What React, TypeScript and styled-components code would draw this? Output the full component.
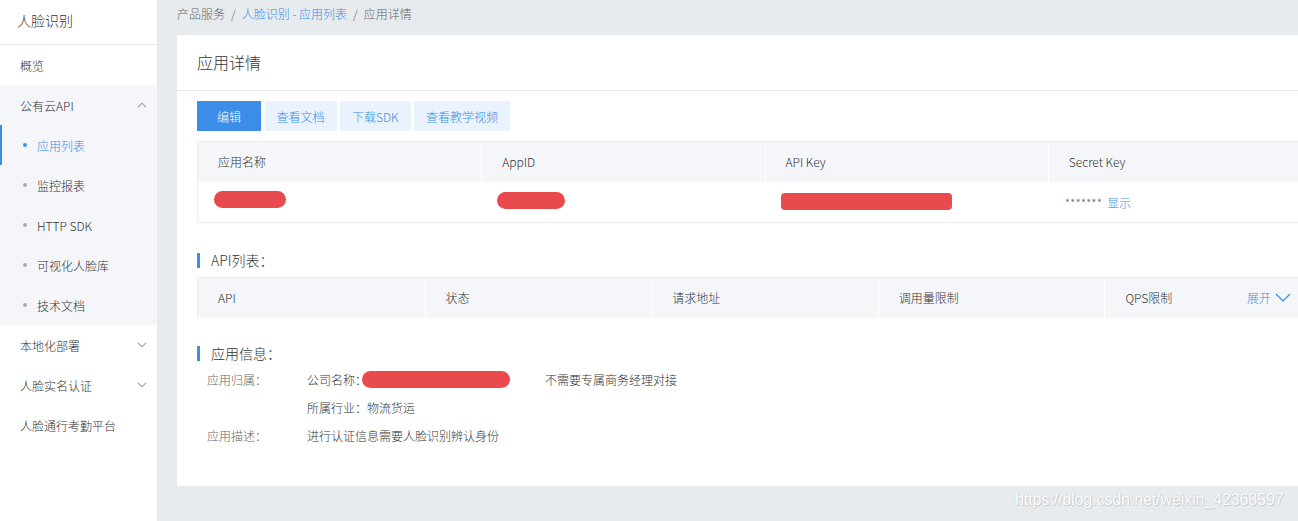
import styled, { createGlobalStyle } from 'styled-components'

const GlobalStyle = createGlobalStyle`
  html, body {
    margin: 0;
    padding: 0;
    height: 100%;
    overflow: hidden;
  }
  body {
    font-family: "Noto Sans CJK SC", "Noto Sans", sans-serif;
    font-size: 12px;
    font-weight: 300;
    color: #333;
    background: #e8ebee;
  }
  #root {
    height: 100%;
  }
`

const Layout = styled.div`
  display: flex;
  height: 521px;
  width: 1400px;
  position: relative;
`

const Aside = styled.aside`
  width: 157px;
  flex: none;
  background: #fff;
`

const AsideTitle = styled.div`
  height: 45px;
  line-height: 40px;
  padding-left: 17px;
  font-size: 14px;
  color: #333;
  border-bottom: 1px solid #e6e8eb;
  box-sizing: border-box;
`

const MenuGroup = styled.div<{ $open?: boolean }>`
  background: ${(p) => (p.$open ? '#f5f6fa' : 'transparent')};
`

const MenuItem = styled.div`
  height: 40px;
  display: flex;
  align-items: center;
  justify-content: space-between;
  padding: 0 10px 0 20px;
  color: #333;
`

const SubItem = styled.div<{ $active?: boolean }>`
  height: 40px;
  display: flex;
  align-items: center;
  padding-left: 21px;
  color: ${(p) => (p.$active ? '#3a8ee6' : '#333')};
  border-left: 2px solid ${(p) => (p.$active ? '#3a8ee6' : 'transparent')};
  box-sizing: border-box;
`

const Dot = styled.span<{ $active?: boolean }>`
  width: 4px;
  height: 4px;
  border-radius: 50%;
  background: ${(p) => (p.$active ? '#3a8ee6' : '#aaa')};
  margin-right: 10px;
`

const Chevron = ({ up }: { up?: boolean }) => (
  <svg width="10" height="6" viewBox="0 0 10 6" fill="none">
    <path
      d={up ? 'M1 5.2L5 1.2L9 5.2' : 'M1 0.8L5 4.8L9 0.8'}
      stroke="#999"
      strokeWidth="1.1"
    />
  </svg>
)

const Main = styled.main`
  flex: 1;
  padding-left: 20px;
`

const Breadcrumb = styled.div`
  height: 35px;
  line-height: 28px;
  color: #666;
`

const Sep = styled.span`
  margin: 0 6px;
  color: #666;
`

const Crumb = styled.span<{ $link?: boolean }>`
  color: ${(p) => (p.$link ? '#3a8ee6' : '#666')};
`

const Card = styled.section`
  width: 1175px;
  background: #fff;
  padding-bottom: 37px;
`

const CardHeader = styled.div`
  height: 56px;
  line-height: 54px;
  padding-left: 20px;
  font-size: 16px;
  color: #333;
  border-bottom: 1px solid #e8eaed;
  box-sizing: border-box;
`

const CardBody = styled.div`
  padding: 10px 20px 0;
`

const Toolbar = styled.div`
  display: flex;
  gap: 3.5px;
`

const Button = styled.button<{ $primary?: boolean }>`
  height: 30px;
  min-width: 64px;
  padding: 0 12px;
  border: none;
  font-family: inherit;
  font-weight: 300;
  font-size: 12px;
  background: ${(p) => (p.$primary ? '#3b8de8' : '#eaf3fd')};
  color: ${(p) => (p.$primary ? '#fff' : '#3a8ee6')};
  cursor: pointer;
`

const Table = styled.div<{ $cols: number; $open?: boolean }>`
  margin-top: 10px;
  border: 1px solid #ebedf2;
  border-bottom: ${(p) => (p.$open ? 'none' : '1px solid #ebedf2')};
  display: grid;
  grid-template-columns: repeat(${(p) => p.$cols}, 1fr);
`

const HeadCell = styled.div`
  height: 40px;
  display: flex;
  align-items: center;
  justify-content: space-between;
  padding: 0 40px 1px 20px;
  box-sizing: border-box;
  background: #f5f6fa;
  border-left: 1px solid #fff;
  color: #333;
  &:first-child {
    border-left: none;
  }
`

const BodyCell = styled.div<{ $pad?: number }>`
  height: 40px;
  display: flex;
  align-items: center;
  padding-left: ${(p) => p.$pad ?? 16}px;
  color: #666;
`

const Redact = styled.span<{ $w: number; $r?: number; $lift?: number }>`
  display: inline-block;
  width: ${(p) => p.$w}px;
  height: 17px;
  border-radius: ${(p) => (p.$r !== undefined ? p.$r : 9)}px;
  background: #e94a4e;
  margin-bottom: ${(p) => p.$lift ?? 0}px;
`

const Link = styled.span`
  color: #3a8ee6;
  margin-left: 5px;
  display: inline-flex;
  align-items: center;
  gap: 4px;
`

const SectionTitle = styled.h3<{ $top: number }>`
  margin: ${(p) => p.$top}px 0 0;
  font-size: 14px;
  font-weight: 300;
  color: #333;
  display: flex;
  align-items: center;
  height: 14px;
  &::before {
    content: '';
    width: 3px;
    height: 15px;
    background: #3a8ee6;
    margin-right: 11px;
  }
`

const InfoList = styled.div`
  margin-top: 5px;
  padding-left: 10px;
`

const InfoRow = styled.div`
  display: flex;
  height: 28px;
  align-items: center;
`

const InfoLabel = styled.span`
  width: 100px;
  color: #666;
`

const InfoItem = styled.span<{ $w?: number }>`
  display: inline-flex;
  align-items: center;
  width: ${(p) => (p.$w ? `${p.$w}px` : 'auto')};
  color: #333;
`

const Watermark = styled.div`
  position: absolute;
  left: 1015px;
  top: 491px;
  font-family: "Liberation Sans", Arial, sans-serif;
  font-size: 16px;
  font-weight: 400;
  color: #fff;
  text-shadow: 0 0 1px #b8bcc2, 1px 1px 1px #c8ccd1;
  letter-spacing: -0.1px;
`

const ChevronDown = () => (
  <svg width="16" height="9" viewBox="0 0 16 9" fill="none">
    <path d="M1 1L8 8L15 1" stroke="#3a8ee6" strokeWidth="1.2" />
  </svg>
)

export default function App() {
  return (
    <>
      <GlobalStyle />
      <Layout>
        <Aside>
          <AsideTitle>人脸识别</AsideTitle>
          <MenuItem>概览</MenuItem>
          <MenuGroup $open>
            <MenuItem>
              公有云API
              <Chevron up />
            </MenuItem>
            <SubItem $active>
              <Dot $active />
              应用列表
            </SubItem>
            {['监控报表', 'HTTP SDK', '可视化人脸库', '技术文档'].map((t) => (
              <SubItem key={t}>
                <Dot />
                {t}
              </SubItem>
            ))}
          </MenuGroup>
          <MenuItem>
            本地化部署
            <Chevron />
          </MenuItem>
          <MenuItem>
            人脸实名认证
            <Chevron />
          </MenuItem>
          <MenuItem>人脸通行考勤平台</MenuItem>
        </Aside>
        <Main>
          <Breadcrumb>
            <Crumb>产品服务</Crumb>
            <Sep>/</Sep>
            <Crumb $link>人脸识别 - 应用列表</Crumb>
            <Sep>/</Sep>
            <Crumb>应用详情</Crumb>
          </Breadcrumb>
          <Card>
            <CardHeader>应用详情</CardHeader>
            <CardBody>
              <Toolbar>
                <Button $primary>编辑</Button>
                <Button>查看文档</Button>
                <Button>下载SDK</Button>
                <Button>查看教学视频</Button>
              </Toolbar>
              <Table $cols={4}>
                <HeadCell>应用名称</HeadCell>
                <HeadCell>AppID</HeadCell>
                <HeadCell>API Key</HeadCell>
                <HeadCell>Secret Key</HeadCell>
                <BodyCell>
                  <Redact $w={72} $lift={6} />
                </BodyCell>
                <BodyCell>
                  <Redact $w={68} $lift={4} />
                </BodyCell>
                <BodyCell>
                  <Redact $w={171} $r={4} $lift={2} />
                </BodyCell>
                <BodyCell $pad={17}>
                  *******
                  <Link>显示</Link>
                </BodyCell>
              </Table>
              <SectionTitle $top={30}>API列表：</SectionTitle>
              <Table $cols={5} $open>
                <HeadCell>API</HeadCell>
                <HeadCell>状态</HeadCell>
                <HeadCell>请求地址</HeadCell>
                <HeadCell>调用量限制</HeadCell>
                <HeadCell>
                  QPS限制
                  <Link>
                    展开
                    <ChevronDown />
                  </Link>
                </HeadCell>
              </Table>
              <SectionTitle $top={28}>应用信息：</SectionTitle>
              <InfoList>
                <InfoRow>
                  <InfoLabel>应用归属：</InfoLabel>
                  <InfoItem $w={238}>
                    公司名称：
                    <Redact $w={148} style={{ marginLeft: -5 }} />
                  </InfoItem>
                  <InfoItem>不需要专属商务经理对接</InfoItem>
                </InfoRow>
                <InfoRow>
                  <InfoLabel />
                  <InfoItem>所属行业：物流货运</InfoItem>
                </InfoRow>
                <InfoRow>
                  <InfoLabel>应用描述：</InfoLabel>
                  <InfoItem>进行认证信息需要人脸识别辨认身份</InfoItem>
                </InfoRow>
              </InfoList>
            </CardBody>
          </Card>
        </Main>
        <Watermark>https://blog.csdn.net/weixin_42368597</Watermark>
      </Layout>
    </>
  )
}
